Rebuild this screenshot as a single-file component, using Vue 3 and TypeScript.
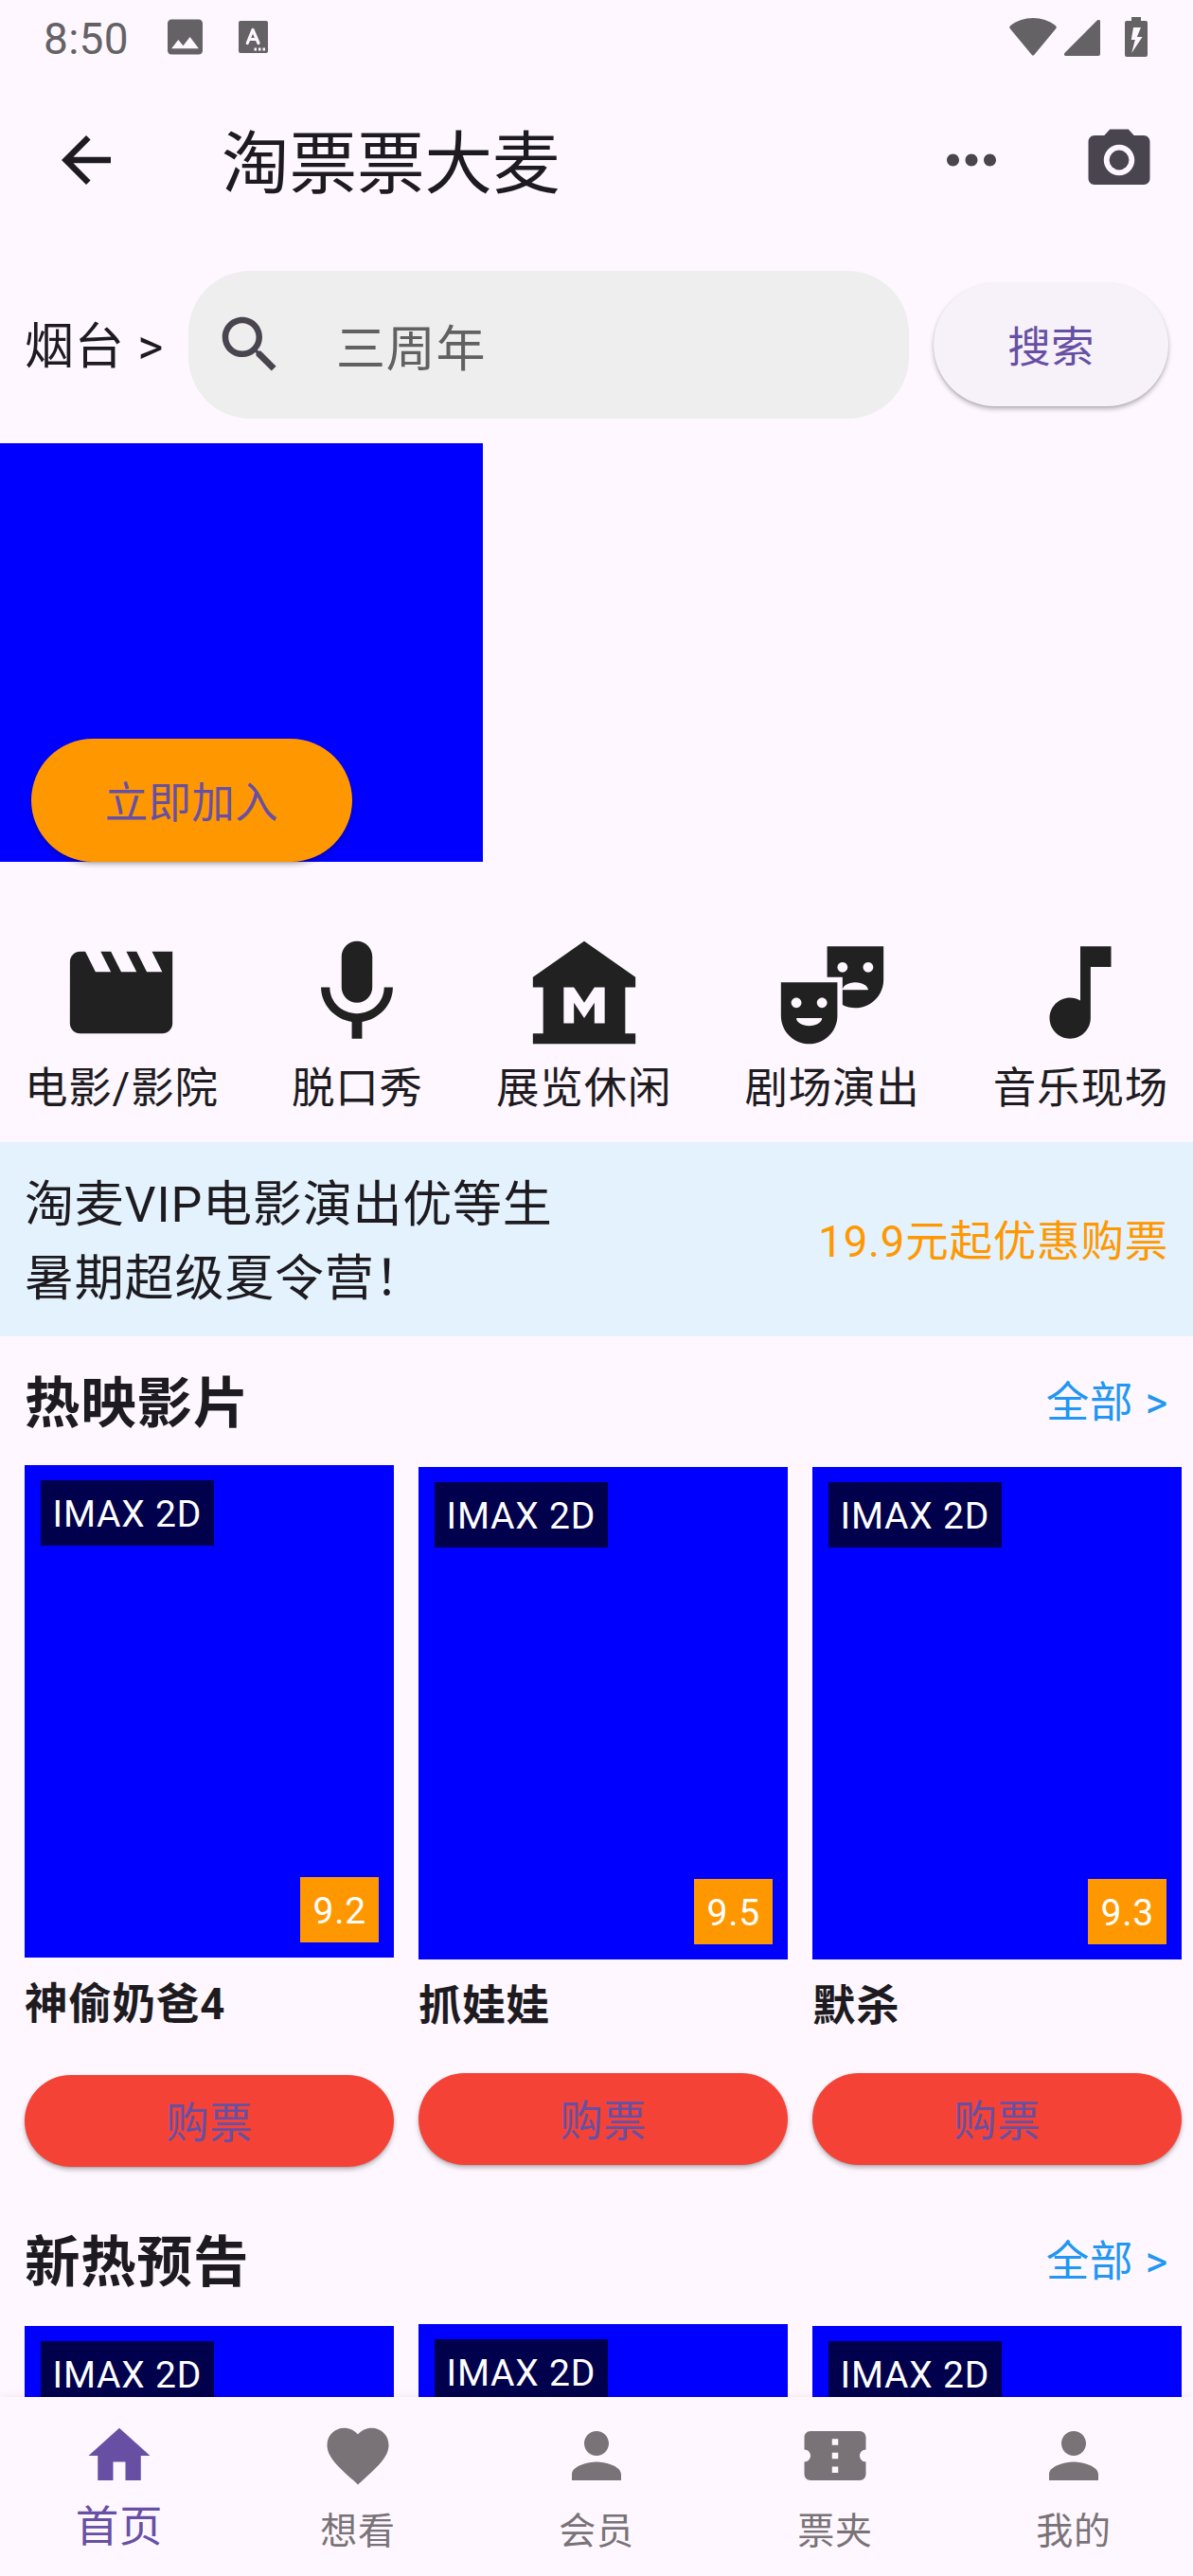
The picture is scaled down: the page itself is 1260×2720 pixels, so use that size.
<script setup lang="ts">
interface Category {
  label: string
  path: string
}
interface Movie {
  title?: string
  score?: string
  tall?: boolean
}
interface Tab {
  label: string
  path: string
}

const categories: Category[] = [
  {
    label: '电影/影院',
    path: 'M18 4l2 4h-3l-2-4h-2l2 4h-3l-2-4H8l2 4H7L5 4H4c-1.1 0-1.99.9-1.99 2L2 18c0 1.1.9 2 2 2h16c1.1 0 2-.9 2-2V4h-4z',
  },
  {
    label: '脱口秀',
    path: 'M12 14c1.66 0 2.99-1.34 2.99-3L15 5c0-1.66-1.34-3-3-3S9 3.34 9 5v6c0 1.66 1.34 3 3 3zm5.3-3c0 3-2.54 5.1-5.3 5.1S6.7 14 6.7 11H5c0 3.41 2.72 6.23 6 6.72V21h2v-3.28c3.28-.48 6-3.3 6-6.72h-1.7z',
  },
  {
    label: '展览休闲',
    path: 'M22 11V9L12 2 2 9v2h2v9H2v2h20v-2h-2v-9h2zm-6 7h-2v-4l-2 3-2-3v4H8v-7h2l2 3 2-3h2v7z',
  },
  {
    label: '剧场演出',
    path: 'M2 16.5C2 19.54 4.46 22 7.5 22s5.5-2.46 5.5-5.5V10H2v6.5zm5.5 2C6.12 18.5 5 17.83 5 17h5c0 .83-1.12 1.5-2.5 1.5zM10 13c.55 0 1 .45 1 1s-.45 1-1 1-1-.45-1-1 .45-1 1-1zm-5 0c.55 0 1 .45 1 1s-.45 1-1 1-1-.45-1-1 .45-1 1-1zM11 3v6h3v2.5c0-.83 1.12-1.5 2.5-1.5s2.5.67 2.5 1.5h-5v2.89c.75.38 1.6.61 2.5.61 3.04 0 5.5-2.46 5.5-5.5V3H11zm3 5.08c-.55 0-1-.45-1-1s.45-1 1-1 1 .45 1 1-.45 1-1 1zm5 0c-.55 0-1-.45-1-1s.45-1 1-1 1 .45 1 1-.45 1-1 1z',
  },
  {
    label: '音乐现场',
    path: 'M12 3v10.55c-.59-.34-1.27-.55-2-.55-2.21 0-4 1.79-4 4s1.79 4 4 4 4-1.79 4-4V7h4V3h-6z',
  },
]

const showing: Movie[] = [
  { title: '神偷奶爸4', score: '9.2', tall: true },
  { title: '抓娃娃', score: '9.5' },
  { title: '默杀', score: '9.3' },
]
// Trailers have neither a score nor a ticket button yet.
const upcoming: Movie[] = [{}, { tall: true }, {}]
const sections = [
  { name: '热映影片', movies: showing },
  { name: '新热预告', movies: upcoming },
]

const person =
  'M12 12c2.21 0 4-1.79 4-4s-1.79-4-4-4-4 1.79-4 4 1.79 4 4 4zm0 2c-2.67 0-8 1.34-8 4v2h16v-2c0-2.66-5.33-4-8-4z'
const tabs: Tab[] = [
  { label: '首页', path: 'M10 20v-6h4v6h5v-8h3L12 3 2 12h3v8z' },
  {
    label: '想看',
    path: 'M12 21.35l-1.45-1.32C5.4 15.36 2 12.28 2 8.5 2 5.42 4.42 3 7.5 3c1.74 0 3.41.81 4.5 2.09C13.09 3.81 14.76 3 16.5 3 19.58 3 22 5.42 22 8.5c0 3.78-3.4 6.86-8.55 11.54L12 21.35z',
  },
  { label: '会员', path: person },
  {
    label: '票夹',
    path: 'M22 10V6c0-1.11-.9-2-2-2H4c-1.1 0-1.99.89-1.99 2v4c1.1 0 1.99.9 1.99 2s-.89 2-2 2v4c0 1.1.9 2 2 2h16c1.1 0 2-.9 2-2v-4c-1.1 0-2-.9-2-2s.9-2 2-2zm-9 7.5h-2v-2h2v2zm0-4.5h-2v-2h2v2zm0-4.5h-2v-2h2v2z',
  },
  { label: '我的', path: person },
]
</script>

<template>
  <div class="screen">
    <div class="status">
      <span class="clock">8:50</span>
      <svg class="st-photo" viewBox="3 3 18 18">
        <path
          d="M21 19V5c0-1.1-.9-2-2-2H5c-1.1 0-2 .9-2 2v14c0 1.100.9 2 2 2h14c1.100 0 2-.9 2-2zM8.500 13.500l2.500 3.010L14.500 12l4.500 6H5l3.500-4.500z"
        />
      </svg>
      <svg class="st-a" viewBox="0 0 31 34">
        <path
          fill-rule="evenodd"
          d="M2 0h27a2 2 0 0 1 2 2v30a2 2 0 0 1-2 2H2a2 2 0 0 1-2-2V2a2 2 0 0 1 2-2zM16.500 28.500v3h2.500v-3zM21 28.500v3h2.500v-3zM25.500 28.500v3H28v-3z"
        />
        <path class="st-a-mark" d="M9.300 23.500L15 9.500L21 23.500M11.500 19.500H18.800" />
      </svg>
      <span class="grow"></span>
      <svg class="st-wifi" viewBox="0 0 50 40">
        <path d="M1 8.200C15-2.700 35-2.700 49 8.200Q50.300 9.400 49.400 11L26.200 39Q25 40.200 23.800 39L.6 11Q-.3 9.400 1 8.200z" />
      </svg>
      <svg class="st-signal" viewBox="0 0 38 38">
        <path d="M34.500.7Q38-1.500 38 2V36Q38 38 36 38H2Q-1.500 38 .6 34.700z" />
      </svg>
      <svg class="st-battery" viewBox="0 0 24 42">
        <path
          fill-rule="evenodd"
          d="M7 0h10v4h5q2 0 2 2v34q0 2-2 2H2q-2 0-2-2V6q0-2 2-2h5zM9 11L6.800 24H10.800L7.200 38L18.500 21H12.800L17 11z"
        />
      </svg>
    </div>

    <header class="appbar">
      <svg class="icon back" viewBox="0 0 24 24">
        <path d="M20 11H7.830l5.590-5.590L12 4l-8 8 8 8 1.410-1.410L7.830 13H20v-2z" />
      </svg>
      <h1>淘票票大麦</h1>
      <svg class="icon action" viewBox="0 0 24 24">
        <path
          d="M6 10c-1.100 0-2 .9-2 2s.9 2 2 2 2-.9 2-2-.9-2-2-2zm12 0c-1.100 0-2 .9-2 2s.9 2 2 2 2-.9 2-2-.9-2-2-2zm-6 0c-1.100 0-2 .9-2 2s.9 2 2 2 2-.9 2-2-.9-2-2-2z"
        />
      </svg>
      <svg class="icon action" viewBox="0 0 24 24">
        <circle cx="12" cy="12" r="3.200" />
        <path
          d="M9 2L7.170 4H4c-1.100 0-2 .9-2 2v12c0 1.100.9 2 2 2h16c1.100 0 2-.9 2-2V6c0-1.100-.9-2-2-2h-3.170L15 2H9zm3 15c-2.760 0-5-2.240-5-5s2.240-5 5-5 5 2.240 5 5-2.240 5-5 5z"
        />
      </svg>
    </header>

    <main class="body">
      <div class="search-row">
        <span class="city">烟台 &gt;</span>
        <div class="field">
          <svg class="icon" viewBox="0 0 24 24">
            <path
              d="M15.500 14h-.79l-.28-.27C15.410 12.590 16 11.110 16 9.500 16 5.910 13.090 3 9.500 3S3 5.910 3 9.500 5.910 16 9.500 16c1.610 0 3.090-.59 4.230-1.570l.27.28v.79l5 4.990L20.490 19l-4.990-5zm-6 0C7.010 14 5 11.990 5 9.500S7.010 5 9.500 5 14 7.010 14 9.500 11.990 14 9.500 14z"
            />
          </svg>
          <span class="hint">三周年</span>
        </div>
        <button class="btn search-btn">搜索</button>
      </div>

      <div class="banner">
        <button class="btn join-btn">立即加入</button>
      </div>

      <div class="cats">
        <div v-for="c in categories" :key="c.label" class="cat">
          <svg viewBox="0 0 24 24"><path :d="c.path" /></svg>
          <span>{{ c.label }}</span>
        </div>
      </div>

      <div class="vip">
        <p>淘麦VIP电影演出优等生<br />暑期超级夏令营！</p>
        <span>19.9元起优惠购票</span>
      </div>

      <section v-for="s in sections" :key="s.name" class="section">
        <div class="head">
          <h2>{{ s.name }}</h2>
          <a>全部 &gt;</a>
        </div>
        <div class="cards">
          <article v-for="(m, i) in s.movies" :key="i" class="card" :class="{ tall: m.tall }">
            <div class="poster">
              <span class="tag">IMAX 2D</span>
              <span v-if="m.score" class="score">{{ m.score }}</span>
            </div>
            <div class="name">{{ m.title }}</div>
            <button v-if="m.title" class="btn buy">购票</button>
          </article>
        </div>
      </section>
    </main>

    <nav class="nav">
      <div v-for="(t, i) in tabs" :key="t.label" class="tab" :class="{ active: i === 0 }">
        <svg class="icon" viewBox="0 0 24 24"><path :d="t.path" /></svg>
        <span>{{ t.label }}</span>
      </div>
    </nav>
  </div>
</template>

<style>
body {
  background: #fef7ff;
}
</style>

<style scoped>
.screen {
  width: 1260px;
  height: 2720px;
  display: flex;
  flex-direction: column;
  overflow: hidden;
  background: #fef7ff;
  color: #1d1b20;
  font-family: Roboto, 'Noto Sans CJK SC', sans-serif;
  font-size: 45.5px;
  letter-spacing: 0.8px;
  white-space: nowrap;
}
svg {
  display: block;
  flex: none;
  fill: currentColor;
}
.icon {
  width: 78px;
  height: 78px;
}
.grow {
  flex: 1;
}
h1,
h2,
p {
  margin: 0;
  font-weight: 400;
}
.btn {
  border: 0;
  margin: 0;
  padding: 0;
  box-sizing: border-box;
  height: 130px;
  border-radius: 65px;
  font: inherit;
  line-height: 122px;
  padding-top: 8px;
  letter-spacing: 0.3px;
  color: #6750a4;
  box-shadow: 0 3px 5px rgba(0, 0, 0, 0.26), 0 1px 2px rgba(0, 0, 0, 0.1);
}

.status {
  height: 78px;
  flex: none;
  box-sizing: border-box;
  padding: 0 48px 0 46px;
  display: flex;
  align-items: center;
  color: #656266;
}
.clock {
  width: 131px;
  font-size: 46px;
  line-height: 78px;
  letter-spacing: 0.3px;
  padding-top: 3px;
}
.st-photo {
  width: 37px;
  height: 38px;
}
.st-a {
  width: 31px;
  height: 34px;
  margin-left: 38px;
}
.st-a-mark {
  fill: none;
  stroke: #fef7ff;
  stroke-width: 3.2;
  stroke-linecap: round;
  stroke-linejoin: round;
}
.st-wifi {
  width: 50px;
  height: 40px;
}
.st-signal {
  width: 38px;
  height: 38px;
  margin: 2px 26px 0 8px;
}
.st-battery {
  width: 24px;
  height: 42px;
}

.appbar {
  height: 182px;
  flex: none;
  display: flex;
  align-items: center;
}
.back {
  margin: 0 104px 0 52px;
}
h1 {
  flex: 1;
  font-size: 71.5px;
  letter-spacing: 0;
  line-height: 90px;
  padding-top: 9px;
}
.action {
  margin: 0 39px;
  color: #49454f;
}

.body {
  flex: 1;
  min-height: 0;
  overflow: hidden;
}
.search-row {
  height: 208px;
  box-sizing: border-box;
  padding: 0 26px;
  display: flex;
  align-items: center;
  font-size: 52px;
}
.city {
  width: 173px;
  padding-bottom: 5px;
}
.field {
  width: 761px;
  height: 156px;
  border-radius: 65px;
  background: #eeeeee;
  display: flex;
  align-items: center;
  color: #49454f;
}
.field .icon {
  margin: 0 52px 0 26px;
}
.hint {
  color: #616161;
  padding-top: 1px;
}
.search-btn {
  width: 248px;
  margin-left: 26px;
  background: #f7f2fa;
  font-size: 45.5px;
}

.banner {
  width: 510px;
  height: 442px;
  box-sizing: border-box;
  padding-left: 32.5px;
  background: #0000ff;
  display: flex;
  align-items: flex-end;
}
.join-btn {
  width: 339.5px;
  background: #ff9800;
}

.cats {
  height: 296px;
  box-sizing: border-box;
  padding: 73px 26px 0;
  display: flex;
  justify-content: space-between;
}
.cat {
  display: flex;
  flex-direction: column;
  align-items: center;
}
.cat svg {
  width: 130px;
  height: 130px;
  color: #212121;
}
.cat span {
  line-height: 68px;
  padding-top: 3px;
}

.vip {
  height: 204.5px;
  box-sizing: border-box;
  padding: 0 26px;
  background: #e3f2fd;
  display: flex;
  align-items: center;
  justify-content: space-between;
}
.vip p {
  font-size: 52px;
  line-height: 78px;
  padding-top: 7px;
}
.vip span {
  color: #ff9800;
  padding-bottom: 3px;
}

.section {
  margin-bottom: 29.5px;
}
.head {
  height: 136.5px;
  box-sizing: border-box;
  padding: 0 26px 4px;
  display: flex;
  align-items: center;
  justify-content: space-between;
}
h2 {
  font-size: 58.5px;
  font-weight: 700;
}
.head a {
  color: #2196f3;
}
.cards {
  display: flex;
  align-items: center;
  gap: 26px;
  padding-left: 26px;
}
.card {
  width: 390px;
  height: 737px;
  flex: none;
  display: flex;
  flex-direction: column;
}
.card.tall {
  height: 741px;
}
.poster {
  position: relative;
  height: 520px;
  flex: none;
  background: #0000ff;
  color: #fff;
  font-size: 39px;
  line-height: 69px;
}
.tag,
.score {
  position: absolute;
  box-sizing: border-box;
  padding: 1.5px 13px 0;
  height: 69px;
}
.tag {
  left: 16.5px;
  top: 16px;
  background: rgba(0, 0, 0, 0.7);
}
.score {
  right: 16px;
  bottom: 16px;
  background: #ff9800;
}
.name {
  flex: 1;
  padding-top: 3px;
  font-weight: 700;
  line-height: 94px;
}
.buy {
  width: 390px;
  height: 97.5px;
  line-height: 91.5px;
  padding-top: 6px;
  flex: none;
  background: #f44336;
}

.nav {
  position: relative;
  height: 189px;
  flex: none;
  display: flex;
  background: #fef7ff;
  box-shadow: 0 0 8px rgba(0, 0, 0, 0.07);
}
.tab {
  flex: 1;
  display: flex;
  flex-direction: column;
  align-items: center;
  padding-top: 23px;
  color: #797377;
  font-size: 39px;
  line-height: 74px;
}
.tab span {
  padding-top: 4px;
}
.tab.active {
  color: #6750a4;
  font-size: 45.5px;
}
.tab.active span {
  padding-top: 0;
}
</style>
